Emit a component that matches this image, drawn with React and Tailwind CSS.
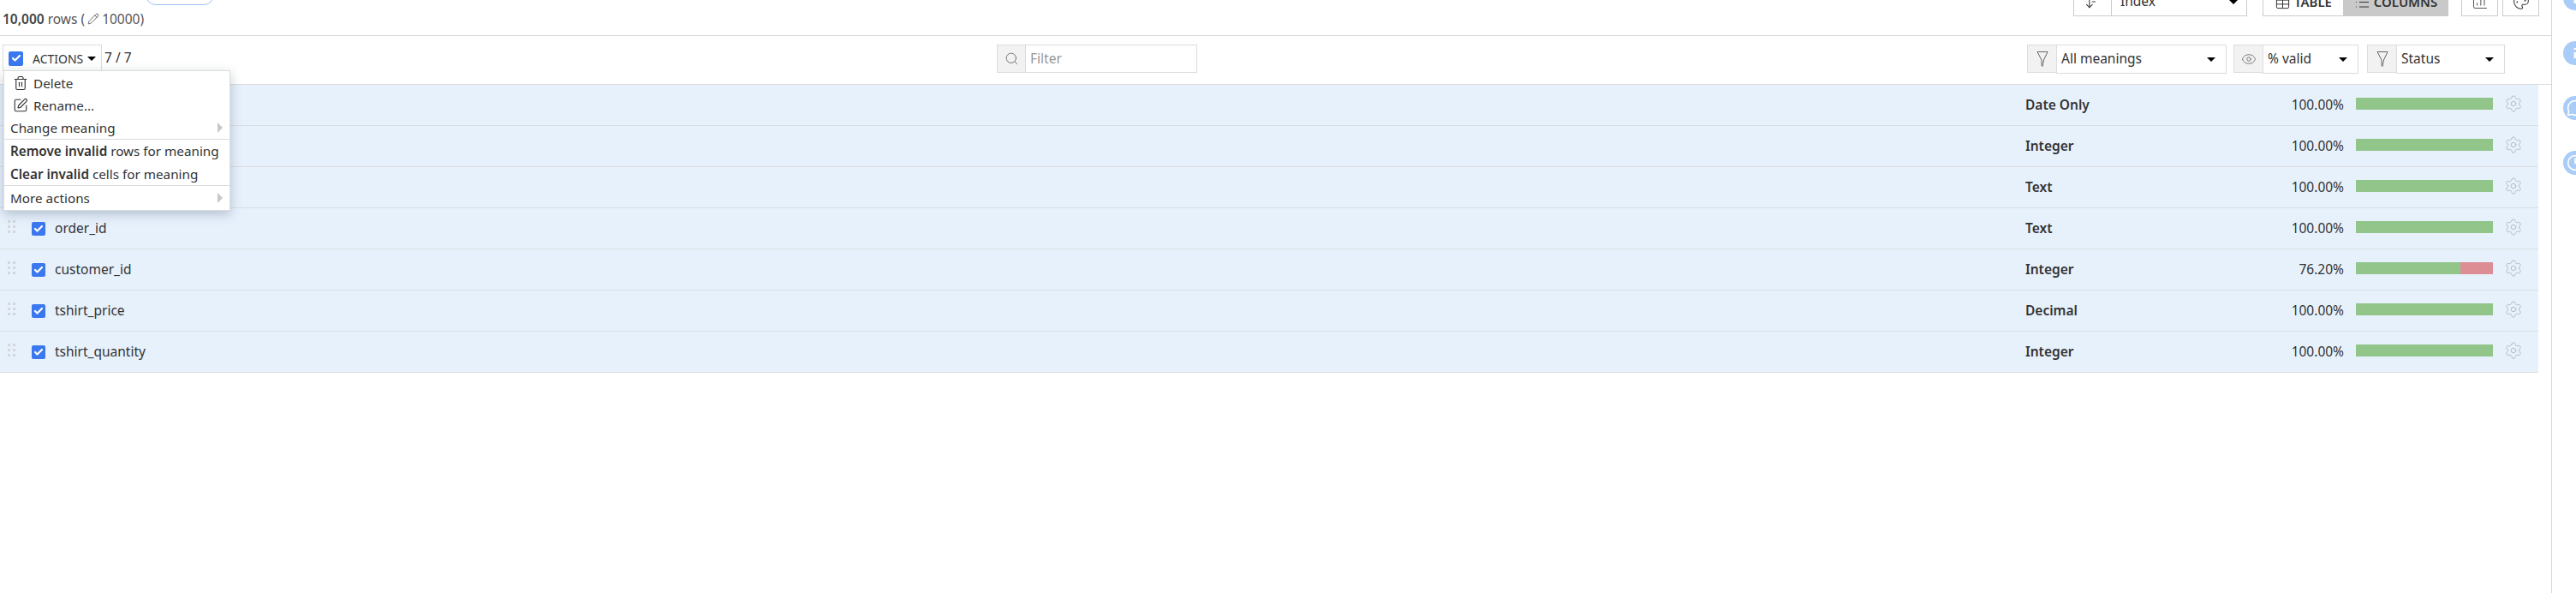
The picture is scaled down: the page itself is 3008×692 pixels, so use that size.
import {
  ArrowDownWideNarrow,
  ChartColumn,
  Check,
  Clock,
  Eye,
  List,
  MessageCircle,
  Palette,
  Pencil,
  Search,
  Settings,
  SquarePen,
  Table,
  Trash2,
} from "lucide-react";

const FONT = { fontFamily: '"Noto Sans", "Lato", sans-serif' };

const rows = [
  { name: "", meaning: "Date Only", valid: 100 },
  { name: "", meaning: "Integer", valid: 100 },
  { name: "", meaning: "Text", valid: 100 },
  { name: "order_id", meaning: "Text", valid: 100 },
  { name: "customer_id", meaning: "Integer", valid: 76.2 },
  { name: "tshirt_price", meaning: "Decimal", valid: 100 },
  { name: "tshirt_quantity", meaning: "Integer", valid: 100 },
];

function Checkbox({ size = "w-4 h-4" }) {
  return (
    <span className={`${size} shrink-0 rounded-[2px] bg-[#3b78f0] flex items-center justify-center`}>
      <Check size={12} strokeWidth={4.5} className="text-white" />
    </span>
  );
}

function Caret() {
  return <span className="w-0 h-0 border-x-[5px] border-x-transparent border-t-[5px] border-t-black" />;
}

function Grip() {
  return (
    <span className="w-2 shrink-0 grid grid-cols-2 gap-x-1 gap-y-[3px]">
      {[0, 1, 2, 3, 4, 5].map((i) => (
        <span key={i} className="w-[3px] h-[3px] bg-[#d3d6da]" />
      ))}
    </span>
  );
}

function Funnel() {
  return (
    <svg width="14" height="20" viewBox="0 0 14 20" fill="none" stroke="#666" strokeWidth="1">
      <path d="M1 1.5h12L8.5 11l-1.5 7.5-1-1V11z" />
    </svg>
  );
}

function FilterSelect({ icon, label, width }) {
  return (
    <div className="flex h-[34px] items-stretch">
      <span className="w-[34px] shrink-0 bg-[#f2f2f2] border border-[#dcdcdc] border-r-0 h-[33px] flex items-center justify-center">
        {icon}
      </span>
      <span className={`${width} border border-[#dcdcdc] flex items-center justify-between pl-[5px] pr-[12px] text-[#333]`}>
        {label}
        <Caret />
      </span>
    </div>
  );
}

function Row({ row }) {
  return (
    <div className="h-12 flex items-center bg-[#e7f1fc] border-b border-[#dadde0] text-[#333]">
      <span className="ml-[9px] -mt-1"><Grip /></span>
      <span className="ml-5"><Checkbox /></span>
      <span className="ml-[11px] flex-1">{row.name}</span>
      <span className="w-[240px] font-semibold">{row.meaning}</span>
      <span className="w-[132px] text-right">{row.valid.toFixed(2)}%</span>
      <div className="ml-[14px] w-40 h-[14px] -mt-1 flex bg-[#dd8d94]">
        <div className="h-full bg-[#91c58a]" style={{ width: `${row.valid}%` }} />
      </div>
      <Settings size={22} strokeWidth={1} className="ml-[13px] mr-[18px] -mt-1 text-[#aeb7c2]" />
    </div>
  );
}

function Menu() {
  return (
    <div className="absolute left-1 top-[40px] w-[265px] h-[164px] bg-white border border-[#dcdcdc] shadow-[0_4px_12px_rgba(60,80,110,0.3)] text-[15.25px] text-[#333] z-10">
      <div className="h-[26px] mt-[1px] flex items-center pl-[10px] gap-[6px]">
        <Trash2 size={18} strokeWidth={1.5} />
        Delete
      </div>
      <div className="h-[26px] flex items-center pl-[10px] gap-[6px]">
        <SquarePen size={18} strokeWidth={1.5} />
        Rename...
      </div>
      <div className="h-[27px] flex items-center justify-between pl-[7px] pr-2 border-b border-[#dcdcdc]">
        Change meaning
        <span className="w-0 h-0 border-y-[6px] border-y-transparent border-l-[6px] border-l-[#c8c8c8]" />
      </div>
      <div className="h-[27px] flex items-center pl-[7px]">
        <span><b className="font-semibold">Remove invalid</b> rows for meaning</span>
      </div>
      <div className="h-[27px] flex items-center pl-[7px] border-b border-[#dcdcdc]">
        <span><b className="font-semibold">Clear invalid</b> cells for meaning</span>
      </div>
      <div className="h-[28px] flex items-center justify-between pl-[7px] pr-2">
        More actions
        <span className="w-0 h-0 border-y-[6px] border-y-transparent border-l-[6px] border-l-[#c8c8c8]" />
      </div>
    </div>
  );
}

function RailDot({ children }) {
  return (
    <span className="w-7 h-7 shrink-0 rounded-full bg-[#a9ccf9] flex items-center justify-center text-white">
      {children}
    </span>
  );
}

// only the left edge of the rail buttons is on screen
function InfoGlyph() {
  return (
    <svg width="20" height="20" viewBox="0 0 20 20" fill="none" stroke="currentColor" strokeWidth="3">
      <path d="M10 9v7M10 4v2" />
    </svg>
  );
}

export default function App() {
  return (
    <div className="h-[692px] w-[3008px] flex overflow-hidden bg-white text-[15.5px]" style={FONT}>
      <main className="w-[2980px] border-r border-[#d8d8d8] overflow-hidden">
        <header className="relative h-[42px] border-b border-[#d8d8d8] flex items-start">
          <div className="absolute left-[170px] -top-[30px] w-[80px] h-[36px] rounded-[12px] border border-[#9cc0f5]" />
          <p className="ml-[3px] mt-[13px] leading-[18px] text-[#555] flex items-center">
            <b className="text-[#444] font-semibold">10,000</b>&nbsp;rows (
            <Pencil size={14} strokeWidth={1.25} className="mx-[3px] text-[#333]" />
            10000)
          </p>
          <div className="ml-auto mr-[14px] -mt-[15px] flex h-[34px] text-[#333]">
            <span className="w-[44px] border border-[#ccc] border-r-0 flex items-center justify-center">
              <ArrowDownWideNarrow size={20} strokeWidth={1.25} />
            </span>
            <span className="w-[159px] border border-[#ccc] flex items-center justify-between pl-[10px] pr-[10px]">
              Index
              <Caret />
            </span>
            <span className="ml-[18px] w-[94px] border border-[#ccc] border-r-0 flex items-center justify-center gap-1 font-semibold text-[15px]">
              <Table size={19} strokeWidth={1.25} />
              TABLE
            </span>
            <span className="w-[123px] bg-[#c9c9c9] flex items-center justify-center gap-1 font-semibold text-[15px]">
              <List size={19} strokeWidth={1.25} />
              COLUMNS
            </span>
            <span className="ml-[15px] w-[43px] border border-[#ccc] flex items-center justify-center">
              <ChartColumn size={20} strokeWidth={1} />
            </span>
            <span className="ml-[5px] w-[43px] border border-[#ccc] flex items-center justify-center">
              <Palette size={20} strokeWidth={1.25} />
            </span>
          </div>
        </header>

        <div className="mr-[15px]">
          <div className="relative h-[57px] border-b border-[#dcdcdc] mr-[-15px] flex items-start pt-[10px] text-[#333]">
            <div className="w-[1164px] flex items-center shrink-0">
              <div className="ml-[3px] w-[116px] h-[31px] border border-[#dcdcdc] border-b-0 flex items-center pl-[6px]">
                <Checkbox size="w-[17px] h-[17px]" />
                <span className="ml-[11px] mr-[5px] text-[14px]">ACTIONS</span>
                <Caret />
              </div>
              <span className="ml-[3px]">7 / 7</span>
            </div>
            <div className="w-[234px] h-[33px] flex border border-[#dcdcdc]">
              <span className="w-[33px] bg-[#f2f2f2] border-r border-[#dcdcdc] flex items-center justify-center">
                <Search size={17} strokeWidth={1.25} className="text-[#666]" />
              </span>
              <span className="pl-[5px] flex items-center text-[#999]">Filter</span>
            </div>
            <div className="ml-[969px] flex">
              <FilterSelect icon={<Funnel />} label="All meanings" width="w-[199px]" />
              <div className="ml-2">
                <FilterSelect icon={<Eye size={18} strokeWidth={1} className="text-[#555]" />} label="% valid" width="w-[112px]" />
              </div>
              <div className="ml-[10px]">
                <FilterSelect icon={<Funnel />} label="Status" width="w-[127px]" />
              </div>
            </div>
            <Menu />
          </div>

          {rows.map((row, i) => (
            <Row key={i} row={row} />
          ))}
        </div>
      </main>

      <aside className="flex-1 overflow-hidden flex flex-col pl-[13px] pt-0 gap-[36px]">
        <span className="-mt-[16px]"><RailDot><InfoGlyph /></RailDot></span>
        <RailDot><InfoGlyph /></RailDot>
        <RailDot><MessageCircle size={20} /></RailDot>
        <RailDot><Clock size={20} /></RailDot>
      </aside>
    </div>
  );
}
